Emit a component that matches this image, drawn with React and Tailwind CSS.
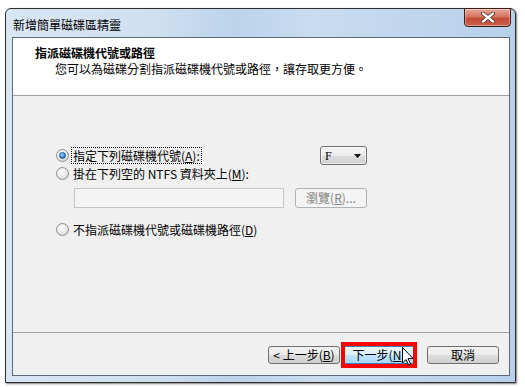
import React from "react";

const font = { fontFamily: '"Noto Sans CJK TC", "Noto Sans CJK SC", sans-serif' };

function Radio({ checked }) {
  return (
    <span className="w-[13px] h-[13px] shrink-0 rounded-full border border-[#8e8f8f] bg-[radial-gradient(circle_at_40%_35%,#ffffff,#e4e4e4_60%,#c8c8c8)] flex items-center justify-center">
      {checked && (
        <span className="w-[7px] h-[7px] rounded-full bg-[radial-gradient(circle_at_40%_35%,#a8dcff,#3d8ad8_55%,#0f4e9e)] border border-[#1c5a9e]" />
      )}
    </span>
  );
}

function WinButton({ children, hover, disabled, className = "" }) {
  const base = hover
    ? "border-[#3c7fb1] bg-[linear-gradient(#eaf6fd_0%,#d9f0fc_50%,#bee6fd_51%,#a7d9f5_100%)]"
    : disabled
    ? "border-[#adb2b5] bg-[#f4f4f4] text-[#838383]"
    : "border-[#707070] bg-[linear-gradient(#f2f2f2_0%,#ebebeb_50%,#dddddd_51%,#cfcfcf_100%)]";
  return (
    <div
      className={`h-[18px] rounded-[3px] border flex items-center justify-center text-[12px] leading-[16px] ${base} ${className}`}
    >
      {children}
    </div>
  );
}

export default function App() {
  return (
    <div className="w-[525px] h-[387px] bg-white relative overflow-hidden text-black" style={font}>
      <div className="ml-[5px] mt-[8px] w-[511px] h-[375px] rounded-t-[6px] border border-[#2e2e2e] bg-[linear-gradient(90deg,#d9e6f4_0%,#cfdff0_30%,#bcd3eb_45%,#c9dcf0_60%,#b8d0ea_100%)] flex flex-col shadow-[1px_1px_2px_rgba(0,0,0,0.5)]">
        {/* title bar */}
        <div className="h-[28px] flex items-start justify-between pl-[7px] pr-[4px] shrink-0">
          <span className="text-[12px] leading-[16px] mt-[8px]">新增簡單磁碟區精靈</span>
          <div className="w-[47px] h-[19px] -mt-[1px] rounded-b-[4px] border border-[#3c1e18] bg-[linear-gradient(#e9a99b_0%,#d4745f_45%,#c44b36_55%,#c9614c_100%)] flex items-center justify-center shadow-[inset_0_0_0_1px_rgba(255,255,255,0.35)]">
            <svg width="14" height="11" viewBox="0 0 14 11">
              <path d="M2 1.5 L12 9.5 M12 1.5 L2 9.5" stroke="#4a2a22" strokeWidth="4" strokeLinecap="round" />
              <path d="M2 1.5 L12 9.5 M12 1.5 L2 9.5" stroke="#ffffff" strokeWidth="2.4" strokeLinecap="round" />
            </svg>
          </div>
        </div>
        {/* client */}
        <div className="ml-[6px] mr-[5px] mb-[6px] flex-1 border border-[#5a6878] flex flex-col bg-[#f0f0f0]">
          <div className="h-[58px] bg-white border-b border-[#a0a0a0] shrink-0 pt-[7px] pl-[22px]">
            <div className="text-[12px] leading-[16px] font-bold">指派磁碟機代號或路徑</div>
            <div className="text-[12px] leading-[16px] pl-[20px]">您可以為磁碟分割指派磁碟機代號或路徑，讓存取更方便。</div>
          </div>
          <div className="flex-1 pl-[43px] pt-[50px] flex flex-col">
            <div className="w-[311px] h-[19px] flex items-center justify-between">
              <div className="flex items-center">
                <Radio checked />
                <span className="ml-[3px] text-[12px] leading-[15px] outline-1 outline-dotted outline-[#000] outline-offset-0 px-[1px]">
                  指定下列磁碟機代號(<u>A</u>):
                </span>
              </div>
              <div className="w-[47px] h-[19px] rounded-[3px] border border-[#707070] bg-[linear-gradient(#f4f4f4_0%,#ebebeb_50%,#dddddd_51%,#d0d0d0_100%)] flex items-center justify-between pl-[4px] pr-[5px] shadow-[inset_0_0_0_1px_rgba(255,255,255,0.6)]">
                <span className="text-[12px] leading-[14px]" style={{ fontFamily: '"Liberation Serif", serif' }}>F</span>
                <svg width="7" height="4" viewBox="0 0 7 4"><path d="M0 0 H7 L3.5 4 Z" fill="#000" /></svg>
              </div>
            </div>
            <div className="h-[16px] flex items-center">
              <Radio />
              <span className="ml-[4px] text-[12px] leading-[15px]">掛在下列空的 NTFS 資料夾上(<u>M</u>):</span>
            </div>
            <div className="mt-[7px] flex items-center pl-[18px]">
              <div className="w-[210px] h-[20px] border border-[#c2c6ca] bg-[#f4f4f4]" />
              <WinButton disabled className="ml-[11px] w-[72px] h-[20px]">瀏覽(<u>R</u>)...</WinButton>
            </div>
            <div className="mt-[13px] h-[16px] flex items-center">
              <Radio />
              <span className="ml-[4px] text-[12px] leading-[15px]">不指派磁碟機代號或磁碟機路徑(<u>D</u>)</span>
            </div>
          </div>
          <div className="h-[43px] border-t border-[#a0a0a0] shrink-0 flex items-start justify-end pt-[13px] pr-[10px]">
            <WinButton className="w-[72px]">&lt; 上一步(<u>B</u>)</WinButton>
            <div className="relative ml-[3px]">
              <WinButton hover className="w-[72px]">下一步(<u>N</u>)</WinButton>
              <div className="absolute -left-[2px] -top-[4px] w-[76px] h-[26px] border-[4px] border-[#ff0000]" />
            </div>
            <WinButton className="w-[72px] ml-[12px]">取消</WinButton>
          </div>
        </div>
      </div>
      {/* mouse cursor */}
      <svg className="absolute left-[402px] top-[347px]" width="12" height="19" viewBox="0 0 12 19">
        <path d="M0.5 0.5 L0.5 16 L4 12.5 L6.5 18 L8.5 17 L6 11.5 L11 11.5 Z" fill="#fff" stroke="#000" strokeWidth="1" strokeLinejoin="miter" />
      </svg>
    </div>
  );
}
